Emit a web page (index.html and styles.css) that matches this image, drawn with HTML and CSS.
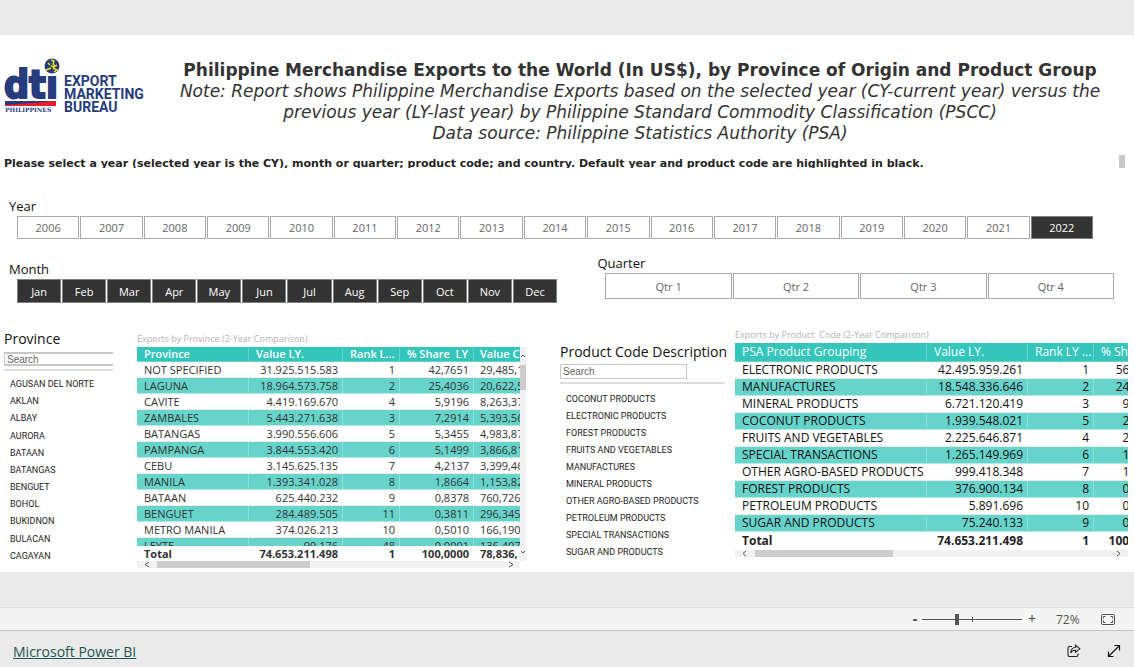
FILE: index.html
```html
<!DOCTYPE html>
<html lang="en">
<head>
<meta charset="utf-8">
<title>Philippine Merchandise Exports</title>
<link rel="stylesheet" href="styles.css">
</head>
<body>
<main class="report">
  <header class="masthead">
    <svg class="logo" width="146" height="60" viewBox="0 0 146 60" role="img" aria-label="DTI Export Marketing Bureau">
      <text class="logo-dti" x="4" y="43">dti</text>
      <circle cx="52" cy="11" r="9.500" fill="#fff"/>
      <circle cx="52" cy="11" r="7.500" fill="#263c7c"/>
      <path d="M51 5l3 1-1 3 2 2M48 8l2 2M51 11l3 1 3-2M46 15l5-2M53 13l4 2-3 2" fill="none" stroke="#f4e21c" stroke-width="1.500"/>
      <path d="M5 46H56V51H5z" fill="#e5202b"/>
      <path d="M5 46H56L5 50z" fill="#263c7c"/>
      <text class="logo-country" x="5" y="57">PHILIPPINES</text>
      <text class="logo-name" x="64" y="31">EXPORT</text>
      <text class="logo-name" x="64" y="44">MARKETING</text>
      <text class="logo-name" x="64" y="57">BUREAU</text>
    </svg>
    <div class="headline">
      <h1>Philippine Merchandise Exports to the World (In US$), by Province of Origin and Product Group</h1>
      <p>Note: Report shows Philippine Merchandise Exports based on the selected year (CY-current year) versus the<br>previous year (LY-last year) by Philippine Standard Commodity Classification (PSCC)</p>
      <p>Data source: Philippine Statistics Authority (PSA)</p>
    </div>
  </header>

  <div class="hint">
    <p>Please select a year (selected year is the CY), month or quarter; product code; and country. Default year and product code are highlighted in black.</p>
    <span class="hint-thumb"></span>
  </div>

  <section class="slicer year">
    <h2>Year</h2>
    <div class="tiles">
      <button>2006</button><button>2007</button><button>2008</button><button>2009</button><button>2010</button><button>2011</button><button>2012</button><button>2013</button><button>2014</button><button>2015</button><button>2016</button><button>2017</button><button>2018</button><button>2019</button><button>2020</button><button>2021</button><button class="on">2022</button>
    </div>
  </section>

  <div class="periods">
    <section class="slicer month">
      <h2>Month</h2>
      <div class="tiles">
        <button class="on">Jan</button><button class="on">Feb</button><button class="on">Mar</button><button class="on">Apr</button><button class="on">May</button><button class="on">Jun</button><button class="on">Jul</button><button class="on">Aug</button><button class="on">Sep</button><button class="on">Oct</button><button class="on">Nov</button><button class="on">Dec</button>
      </div>
    </section>
    <section class="slicer quarter">
      <h2>Quarter</h2>
      <div class="tiles">
        <button>Qtr 1</button><button>Qtr 2</button><button>Qtr 3</button><button>Qtr 4</button>
      </div>
    </section>
  </div>

  <div class="details">
    <section class="picker picker-province">
      <h2><label for="province-search">Province</label></h2>
      <input id="province-search" type="text" placeholder="Search">
      <ul>
        <li>AGUSAN DEL NORTE</li><li>AKLAN</li><li>ALBAY</li><li>AURORA</li><li>BATAAN</li><li>BATANGAS</li><li>BENGUET</li><li>BOHOL</li><li>BUKIDNON</li><li>BULACAN</li><li>CAGAYAN</li>
      </ul>
    </section>

    <section class="grid-visual by-province">
      <h3>Exports by Province (2-Year Comparison)</h3>
      <div class="pane">
        <div class="view">
          <table>
            <colgroup><col class="c-name"><col class="c-value"><col class="c-rank"><col class="c-share"><col class="c-next"></colgroup>
            <thead><tr><th>Province</th><th>Value LY.</th><th>Rank L...</th><th>% Share&nbsp; LY</th><th>Value CY.</th></tr></thead>
            <tbody>
              <tr><td>NOT SPECIFIED</td><td>31.925.515.583</td><td>1</td><td>42,7651</td><td>29,485,1</td></tr>
              <tr><td>LAGUNA</td><td>18.964.573.758</td><td>2</td><td>25,4036</td><td>20,622,5</td></tr>
              <tr><td>CAVITE</td><td>4.419.169.670</td><td>4</td><td>5,9196</td><td>8,263,37</td></tr>
              <tr><td>ZAMBALES</td><td>5.443.271.638</td><td>3</td><td>7,2914</td><td>5,393,56</td></tr>
              <tr><td>BATANGAS</td><td>3.990.556.606</td><td>5</td><td>5,3455</td><td>4,983,87</td></tr>
              <tr><td>PAMPANGA</td><td>3.844.553.420</td><td>6</td><td>5,1499</td><td>3,866,81</td></tr>
              <tr><td>CEBU</td><td>3.145.625.135</td><td>7</td><td>4,2137</td><td>3,399,46</td></tr>
              <tr><td>MANILA</td><td>1.393.341.028</td><td>8</td><td>1,8664</td><td>1,153,82</td></tr>
              <tr><td>BATAAN</td><td>625.440.232</td><td>9</td><td>0,8378</td><td>760,726</td></tr>
              <tr><td>BENGUET</td><td>284.489.505</td><td>11</td><td>0,3811</td><td>296,345</td></tr>
              <tr><td>METRO MANILA</td><td>374.026.213</td><td>10</td><td>0,5010</td><td>166,190</td></tr>
              <tr><td>LEYTE</td><td>99.176</td><td>48</td><td>0,0001</td><td>136,407</td></tr>
            </tbody>
            <tfoot><tr><td>Total</td><td>74.653.211.498</td><td>1</td><td>100,0000</td><td>78,836,</td></tr></tfoot>
          </table>
        </div>
        <div class="vbar">
          <svg width="6" height="6" viewBox="0 0 6 6"><path d="M1 4l2-2 2 2"/></svg>
          <span class="vthumb"></span>
          <svg width="6" height="6" viewBox="0 0 6 6"><path d="M1 2l2 2 2-2"/></svg>
        </div>
        <div class="hbar">
          <svg width="20" height="7" viewBox="0 0 20 7"><path d="M12 1L8 3.500l4 2.500"/></svg>
          <span class="hthumb"></span>
          <svg width="20" height="7" viewBox="0 0 20 7"><path d="M9 1l4 2.500-4 2.500"/></svg>
        </div>
      </div>
    </section>

    <section class="picker picker-product">
      <h2><label for="product-search">Product Code Description</label></h2>
      <input id="product-search" type="text" placeholder="Search">
      <ul>
        <li>COCONUT PRODUCTS</li><li>ELECTRONIC PRODUCTS</li><li>FOREST PRODUCTS</li><li>FRUITS AND VEGETABLES</li><li>MANUFACTURES</li><li>MINERAL PRODUCTS</li><li>OTHER AGRO-BASED PRODUCTS</li><li>PETROLEUM PRODUCTS</li><li>SPECIAL TRANSACTIONS</li><li>SUGAR AND PRODUCTS</li>
      </ul>
    </section>

    <section class="grid-visual by-product">
      <h3>Exports by Product&nbsp; Code (2-Year Comparison)</h3>
      <div class="pane">
        <div class="view">
          <table>
            <colgroup><col class="c-name"><col class="c-value"><col class="c-rank"><col class="c-share"></colgroup>
            <thead><tr><th>PSA Product Grouping</th><th>Value LY.</th><th>Rank LY ...</th><th>% Share LY</th></tr></thead>
            <tbody>
              <tr><td>ELECTRONIC PRODUCTS</td><td>42.495.959.261</td><td>1</td><td>56,9245</td></tr>
              <tr><td>MANUFACTURES</td><td>18.548.336.646</td><td>2</td><td>24,8460</td></tr>
              <tr><td>MINERAL PRODUCTS</td><td>6.721.120.419</td><td>3</td><td>9,0031</td></tr>
              <tr><td>COCONUT PRODUCTS</td><td>1.939.548.021</td><td>5</td><td>2,5981</td></tr>
              <tr><td>FRUITS AND VEGETABLES</td><td>2.225.646.871</td><td>4</td><td>2,9813</td></tr>
              <tr><td>SPECIAL TRANSACTIONS</td><td>1.265.149.969</td><td>6</td><td>1,6947</td></tr>
              <tr><td>OTHER AGRO-BASED PRODUCTS</td><td>999.418.348</td><td>7</td><td>1,3387</td></tr>
              <tr><td>FOREST PRODUCTS</td><td>376.900.134</td><td>8</td><td>0,5049</td></tr>
              <tr><td>PETROLEUM PRODUCTS</td><td>5.891.696</td><td>10</td><td>0,0079</td></tr>
              <tr><td>SUGAR AND PRODUCTS</td><td>75.240.133</td><td>9</td><td>0,1008</td></tr>
            </tbody>
            <tfoot><tr><td>Total</td><td>74.653.211.498</td><td>1</td><td>100,0000</td></tr></tfoot>
          </table>
        </div>
        <div class="hbar">
          <svg width="20" height="7" viewBox="0 0 20 7"><path d="M11 1L8 3.500l3 2.500"/></svg>
          <span class="hthumb"></span>
          <svg width="20" height="7" viewBox="0 0 20 7"><path d="M9 1l3 2.500-3 2.500"/></svg>
        </div>
      </div>
    </section>
  </div>
</main>

<div class="zoombar">
  <button class="step" aria-label="Zoom out">-</button>
  <input class="zoom" type="range" min="0" max="100" value="34" aria-label="Zoom">
  <button class="step" aria-label="Zoom in">+</button>
  <span class="percent">72%</span>
  <button class="fit" aria-label="Fit to page">
    <svg width="14" height="11" viewBox="0 0 14 11" fill="none" stroke="#4f4f4f"><rect x=".5" y=".5" width="13" height="10" rx="1"/><path d="M4.500 2.500h-2v2M2.500 6.500v2h2M9.500 2.500h2v2M11.500 6.500v2h-2"/></svg>
  </button>
</div>

<footer class="footer">
  <a href="#">Microsoft Power BI</a>
  <div class="actions">
    <button aria-label="Share">
      <svg width="14" height="14" viewBox="0 0 14 14" fill="none" stroke="#222" stroke-width="1.100"><path d="M5 2.500H2.500a1.500 1.500 0 0 0-1.500 1.500v7A1.500 1.500 0 0 0 2.500 12.500h7A1.500 1.500 0 0 0 11 11V9.500M8.500 1.200l4.300 3.600-4.300 3.600V6.300C6 6.200 4.700 7.200 3.700 9 3.900 5.800 5.600 3.700 8.500 3.300z"/></svg>
    </button>
    <button aria-label="Full screen">
      <svg width="14" height="14" viewBox="0 0 14 14" fill="none" stroke="#111" stroke-width="1.200"><path d="M1.500 12.500l11-11M7.500 1.500h5v5M1.500 7.500v5h5"/></svg>
    </button>
  </div>
</footer>
</body>
</html>
```

FILE: styles.css
```css
* { box-sizing: border-box; }
body {
  margin: 0;
  padding-top: 35px;
  background: #eaeaea;
  color: #252423;
  font-family: "Open Sans", "Noto Sans", sans-serif;
}
h1, h2, h3, p, ul { margin: 0; padding: 0; }
button { padding: 0; font-family: inherit; }

.report { background: #fff; padding-bottom: 4px; overflow: hidden; }

/* Masthead */
.masthead { display: flex; align-items: flex-start; padding: 20px 4px 0 0; }
.logo { flex: none; }
.logo-dti { font: bold 39px "DejaVu Sans Condensed", "DejaVu Sans", sans-serif; fill: #263c7c; stroke: #263c7c; stroke-width: 2px; }
.logo-country { font: bold 6px "DejaVu Serif", serif; fill: #263c7c; }
.logo-name { font: bold 14px Roboto, sans-serif; fill: #263c7c; }
.headline {
  flex: 1;
  padding: 5px 0 0 4px;
  text-align: center;
  font-family: "DejaVu Sans", Verdana, sans-serif;
  color: #333;
}
.headline h1, .headline p { font-size: 17px; line-height: 21px; white-space: nowrap; }
.headline p { font-style: italic; }

.hint {
  display: flex;
  justify-content: space-between;
  height: 13px;
  margin-top: 11px;
  padding: 0 9px 0 4px;
  overflow: hidden;
}
.hint p { font: bold 11px/18px "DejaVu Sans", Verdana, sans-serif; color: #252423; white-space: nowrap; }
.hint-thumb { width: 6px; background: #c8c8c8; }

/* Slicers */
h2 { font-size: 13px; font-weight: 400; line-height: 18px; color: #111; white-space: nowrap; }
.slicer h2 { padding-left: 9px; }
.tiles { display: grid; grid-auto-flow: column; grid-auto-columns: 1fr; gap: 1px; margin: 1px 0 0 17px; }
.tiles button {
  height: 23px;
  border: 1px solid #a9a9a9;
  background: #fff;
  color: #666;
  font-size: 11px;
}
.tiles .on { background: #333; color: #fff; border-color: #808080; }
.year { padding: 29px 41px 0 0; }
.periods { display: flex; justify-content: space-between; margin-top: 15px; padding-right: 20px; }
.month { width: 50%; padding: 6px 0 0; }
.month .tiles button { height: 24px; }
.quarter { width: 47%; }
.quarter h2 { padding-left: 7px; }
.quarter .tiles { margin-left: 15px; }
.quarter .tiles button { height: 26px; }

/* Lower half */
.details { display: grid; grid-template-columns: 113fr 413fr 199fr 403fr; margin-top: 22px; padding-right: 6px; align-items: start; }
.details > * { min-width: 0; }

.picker h2 { font-size: 14px; }
.picker input {
  display: block;
  width: 100%;
  height: 14px;
  margin-top: 4px;
  padding: 0 2px;
  border: 1px solid #c8c8c8;
  font: 10px "Liberation Sans", Arial, sans-serif;
}
.picker input::placeholder { color: #666; opacity: 1; }
.picker ul { margin-top: 3px; border-top: 2px solid #ddd; list-style: none; }
.picker li { padding-left: 6px; font-family: Roboto, sans-serif; font-size: 9px; line-height: 17px; white-space: nowrap; }
.picker-province { padding: 5px 0 0 4px; }
.picker-province input { border-width: 2px 0 2px 1px; }
.picker-province ul { display: grid; grid-auto-rows: 1fr; height: 196px; padding-top: 5px; }
.picker-product { padding: 18px 0 0 34px; }
.picker-product input { width: 77%; height: 15px; margin-top: 3px; }
.picker-product ul { padding-top: 7px; }

.grid-visual h3 { font-size: 9px; font-weight: 400; line-height: 17px; color: #b3b3b3; white-space: nowrap; }
.by-province { padding: 5px 0 0 24px; }
.by-product { padding: 1px 0 0 10px; }
.pane { display: grid; grid-template-columns: minmax(0, 1fr) auto; }
.view { overflow: hidden; }

table { table-layout: fixed; border-collapse: separate; border-spacing: 0; color: #333; }
th, td { padding: 0 4px 0 0; text-align: right; font-size: 11px; line-height: 14px; white-space: nowrap; overflow: hidden; border-right: 1px solid transparent; border-bottom: 1px solid #eaeaea; }
th { padding: 0 0 0 7px; text-align: left; font-weight: 600; color: #fff; background: #34c6bb; border-color: #67d4cc; }
td:first-child { padding-left: 7px; text-align: left; }
tbody tr:nth-child(even) td { background: #67d4cc; border-right-color: #8ee0da; border-bottom-color: #b5ebe7; }
tfoot td { position: sticky; bottom: 0; background: #fff; font-weight: 700; border-bottom: 0; }

.by-province table { width: 480px; }
.by-province .c-name { width: 112px; }
.by-province .c-value { width: 94px; }
.by-province .c-rank { width: 57px; }
.by-province .c-share { width: 74px; }
.by-province td { height: 16px; }
.by-province th { height: 15px; }
.by-province tfoot td { height: 15px; }
.by-province td:last-child { padding-left: 6px; text-align: left; }
.by-province th:last-child { padding-left: 6px; }
.by-province .view { height: 214px; }

.by-product table { width: 430px; color: #111; }
.by-product .c-name { width: 192px; }
.by-product .c-value { width: 101px; }
.by-product .c-rank { width: 66px; }
.by-product th, .by-product td { height: 17px; font-size: 12px; line-height: 16px; }
.by-product th { height: 19px; font-weight: 400; }
.by-product tfoot td { height: 18px; color: #252423; }

.vbar, .hbar { display: flex; background: #f1f1f1; }
.vbar { flex-direction: column; width: 6px; }
.vbar svg { flex: none; margin: 6px 0; }
.vbar svg:last-child { margin: auto 0 6px; }
.vthumb { height: 25px; background: #cdcdcd; }
.hbar { grid-column: 1; height: 7px; }
.hbar svg:last-child { margin-left: auto; }
.hthumb { width: 40%; background: #cdcdcd; }
.by-product .hthumb { width: 35%; }
.vbar path, .hbar path { fill: none; stroke: #555; }

/* Zoom controls and footer */
.zoombar {
  display: flex;
  align-items: center;
  justify-content: flex-end;
  height: 24px;
  margin-top: 35px;
  padding-right: 19px;
  border-top: 1px solid #ddd;
  border-bottom: 1px solid #c6c6c6;
  background: #f4f4f4;
  color: #555;
}
.step { width: 20px; border: 0; background: none; color: #444; font-size: 14px; line-height: 20px; }
.step:first-child { width: 14px; font-weight: 700; }
.zoom {
  appearance: none;
  width: 100px;
  height: 12px;
  margin: 0;
  background:
    linear-gradient(#555, #555) 50px 4px / 1px 5px no-repeat,
    linear-gradient(#555, #555) 0 6px / 100% 1px no-repeat;
}
.zoom::-webkit-slider-thumb { appearance: none; width: 4px; height: 11px; background: #555; }
.percent { width: 59px; padding-left: 14px; font-size: 12px; }
.fit { display: flex; border: 0; background: none; }

.footer { display: flex; align-items: center; justify-content: space-between; height: 36px; padding: 4px 13px 0; }
.footer a { color: #1f5550; font-size: 14px; }
.actions { display: flex; gap: 26px; }
.actions button { display: flex; border: 0; background: none; }
```
